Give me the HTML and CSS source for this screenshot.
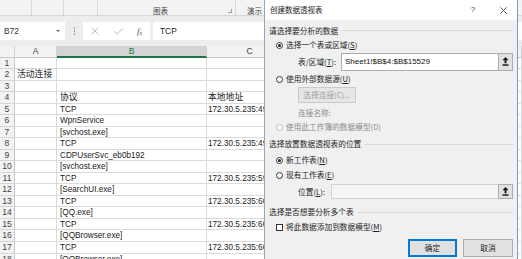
FILE: index.html
```html
<!DOCTYPE html>
<html lang="zh-CN">
<head>
<meta charset="utf-8">
<title>创建数据透视表</title>
<link rel="stylesheet" href="styles.css">
</head>
<body>
<div class="app">
  <div class="ribbon">
    <div class="rg rg1"></div>
    <div class="rg rg2"></div>
    <div class="rg rg3"></div>
    <div class="rg rg4"><span class="rlabel">图表</span><span class="launcher"></span></div>
    <div class="rg rg5"><span class="rlabel">演示</span></div>
  </div>
  <div class="fbar">
    <div class="namebox"><span>B72</span><span class="dd"></span></div>
    <div class="vdots"><i></i><i></i><i></i></div>
    <div class="fxbox">
      <svg class="ic-x" width="8" height="8" viewBox="0 0 8 8"><path d="M0.5 0.5L7.5 7.5M7.5 0.5L0.5 7.5" stroke="#b4b4b4" stroke-width="0.9" fill="none"/></svg>
      <svg class="ic-ok" width="9" height="7" viewBox="0 0 9 7"><path d="M0.5 3.5L3.2 6.2L8.5 0.6" stroke="#b4b4b4" stroke-width="0.9" fill="none"/></svg>
      <span class="fx">f<sub>x</sub></span>
    </div>
    <div class="finput">TCP</div>
  </div>
  <div class="sheet">
    <div class="c hd corner"></div><div class="c hd">A</div><div class="c hd sel">B</div><div class="c hd">C</div><div class="c hd"></div>
    <div class="c rh">1</div><div class="c"></div><div class="c"></div><div class="c"></div><div class="c"></div>
    <div class="c rh">2</div><div class="c cj">活动连接</div><div class="c"></div><div class="c"></div><div class="c"></div>
    <div class="c rh">3</div><div class="c"></div><div class="c"></div><div class="c"></div><div class="c"></div>
    <div class="c rh">4</div><div class="c"></div><div class="c cj">协议</div><div class="c cj">本地地址</div><div class="c"></div>
    <div class="c rh">5</div><div class="c"></div><div class="c">TCP</div><div class="c"><span class="ip">172.30.5.235:49768</span></div><div class="c"></div>
    <div class="c rh">6</div><div class="c"></div><div class="c">WpnService</div><div class="c"></div><div class="c"></div>
    <div class="c rh">7</div><div class="c"></div><div class="c">[svchost.exe]</div><div class="c"></div><div class="c"></div>
    <div class="c rh">8</div><div class="c"></div><div class="c">TCP</div><div class="c"><span class="ip">172.30.5.235:49770</span></div><div class="c"></div>
    <div class="c rh">9</div><div class="c"></div><div class="c">CDPUserSvc_eb0b192</div><div class="c"></div><div class="c"></div>
    <div class="c rh">10</div><div class="c"></div><div class="c">[svchost.exe]</div><div class="c"></div><div class="c"></div>
    <div class="c rh">11</div><div class="c"></div><div class="c">TCP</div><div class="c"><span class="ip">172.30.5.235:59412</span></div><div class="c"></div>
    <div class="c rh">12</div><div class="c"></div><div class="c">[SearchUI.exe]</div><div class="c"></div><div class="c"></div>
    <div class="c rh">13</div><div class="c"></div><div class="c">TCP</div><div class="c"><span class="ip">172.30.5.235:60231</span></div><div class="c"></div>
    <div class="c rh">14</div><div class="c"></div><div class="c">[QQ.exe]</div><div class="c"></div><div class="c"></div>
    <div class="c rh">15</div><div class="c"></div><div class="c">TCP</div><div class="c"><span class="ip">172.30.5.235:60344</span></div><div class="c"></div>
    <div class="c rh">16</div><div class="c"></div><div class="c">[QQBrowser.exe]</div><div class="c"></div><div class="c"></div>
    <div class="c rh">17</div><div class="c"></div><div class="c">TCP</div><div class="c"><span class="ip">172.30.5.235:60352</span></div><div class="c"></div>
    <div class="c rh">18</div><div class="c"></div><div class="c">[QQBrowser.exe]</div><div class="c"></div><div class="c"></div>
  </div>
</div>

<div class="dialog">
  <div class="dtitle">
    <span class="dt">创建数据透视表</span>
    <span class="help">?</span>
    <span class="close"><svg width="7" height="7" viewBox="0 0 7 7"><path d="M0.3 0.3L6.7 6.7M6.7 0.3L0.3 6.7" stroke="#333" stroke-width="0.8" fill="none"/></svg></span>
  </div>
  <div class="dbody">
    <div class="sec s1"><span>请选择要分析的数据</span><i class="rule"></i></div>
    <div class="opt o1"><span class="radio on"></span><span>选择一个表或区域(<u>S</u>)</span></div>
    <div class="field f1">
      <span class="flabel w1">表/区域(<u>T</u>):</span>
      <span class="inp">Sheet1!$B$4:$B$15529</span>
      <span class="pick"><svg width="7" height="9" viewBox="0 0 7 9"><path d="M3.5 0L6.5 3.3H4.4V6.3H2.6V3.3H0.5Z" fill="#111"/><rect x="0.5" y="7.3" width="6" height="1.4" fill="#111"/></svg></span>
    </div>
    <div class="opt o2"><span class="radio"></span><span>使用外部数据源(<u>U</u>)</span></div>
    <div class="sub bt"><span class="btn dis">选择连接(C)...</span></div>
    <div class="sub dim cname">连接名称:</div>
    <div class="opt dim o3"><span class="radio off"></span><span>使用此工作簿的数据模型(D)</span></div>
    <div class="sec s2"><span>选择放置数据透视表的位置</span><i class="rule"></i></div>
    <div class="opt o4"><span class="radio on"></span><span>新工作表(<u>N</u>)</span></div>
    <div class="opt o5"><span class="radio"></span><span>现有工作表(<u>E</u>)</span></div>
    <div class="field f2">
      <span class="flabel w2">位置(<u>L</u>):</span>
      <span class="inp dis"></span>
      <span class="pick"><svg width="7" height="9" viewBox="0 0 7 9"><path d="M3.5 0L6.5 3.3H4.4V6.3H2.6V3.3H0.5Z" fill="#111"/><rect x="0.5" y="7.3" width="6" height="1.4" fill="#111"/></svg></span>
    </div>
    <div class="sec s3"><span>选择是否想要分析多个表</span><i class="rule"></i></div>
    <div class="opt o6"><span class="check"></span><span>将此数据添加到数据模型(<u>M</u>)</span></div>
    <div class="actions"><span class="btn ok">确定</span><span class="btn cancel">取消</span></div>
  </div>
</div>
</body>
</html>
```

FILE: styles.css
```css
* { box-sizing: border-box; margin: 0; padding: 0; }
html, body { width: 522px; height: 259px; overflow: hidden; }
body {
  position: relative;
  background: #fff;
  font-family: "Liberation Sans", "Noto Sans CJK SC", sans-serif;
  color: #222;
}

/* ribbon */
.ribbon {
  display: flex;
  height: 16px;
  background: #f3f3f3;
  border-bottom: 1px solid #d8d8d8;
}
.rg {
  height: 15px;
  border-right: 1px solid #dadada;
  display: flex;
  align-items: flex-end;
}
.rg1 { width: 32px; }
.rg2 { width: 32px; }
.rg3 { width: 34px; }
.rg4 { width: 138px; padding-left: 55px; }
.rg5 { flex: 1; border-right: 0; padding-left: 11px; }
.rlabel {
  font-family: "Noto Sans CJK SC", sans-serif;
  font-size: 7.5px;
  line-height: 9px;
  color: #444;
}
.launcher {
  margin-left: auto;
  margin-right: 3px;
  margin-bottom: 2px;
  width: 4px;
  height: 4px;
  border-right: 1px solid #9a9a9a;
  border-bottom: 1px solid #9a9a9a;
}

/* formula bar */
.fbar {
  display: flex;
  align-items: flex-start;
  height: 30px;
  padding-top: 6px;
  background: #ededed;
}
.namebox, .fxbox, .finput {
  height: 18px;
  background: #fff;
  display: flex;
  align-items: center;
}
.namebox {
  width: 65px;
  padding-left: 4px;
  font-size: 8.4px;
  color: #333;
}
.dd {
  margin-left: auto;
  margin-right: 5px;
  width: 0; height: 0;
  border-left: 2px solid transparent;
  border-right: 2px solid transparent;
  border-top: 2px solid #666;
}
.vdots {
  width: 18px;
  height: 18px;
  display: flex;
  flex-direction: column;
  align-items: center;
  justify-content: center;
  gap: 1.5px;
}
.vdots i { width: 1px; height: 1.5px; background: #9a9a9a; display: block; }
.fxbox { width: 67px; padding-left: 8px; }
.ic-x { margin-right: 15px; }
.ic-ok { margin-right: 14px; }
.fx {
  font-family: "Liberation Serif", serif;
  font-style: italic;
  font-size: 9px;
  color: #555;
}
.fx sub { font-size: 6px; vertical-align: -1px; }
.finput {
  flex: 1;
  margin-left: 3px;
  padding-left: 7px;
  font-size: 8.4px;
  color: #222;
}

/* sheet */
.sheet {
  display: grid;
  grid-template-columns: 15px 42px 150px 86px 1fr;
  grid-template-rows: 11.5px;
  grid-auto-rows: 11.54px;
  font-size: 8.2px;
}
.c {
  border-right: 1px solid #dadada;
  border-bottom: 1px solid #dadada;
  white-space: nowrap;
  overflow: hidden;
  padding-left: 2px;
  line-height: 11px;
  color: #1a1a1a;
}
.c:nth-child(5n+3) { padding-left: 3px; }
.c:nth-child(5n+4) { padding-left: 1px; }
.ip { display: block; width: 56px; overflow: hidden; }
.cj { font-size: 8.8px; }
.hd {
  background: #f3f3f3;
  border-right-color: #d0d0d0;
  border-bottom-color: #c8c8c8;
  text-align: center;
  padding-left: 0 !important;
  font-size: 8.6px;
  color: #444;
}
.hd.sel {
  background: #d4d4d4;
  color: #217346;
  border-bottom: 2px solid #217346;
  line-height: 10px;
}
.rh {
  background: #f3f3f3;
  border-right-color: #c8c8c8;
  border-bottom-color: #d6d6d6;
  text-align: center;
  padding-left: 0 !important;
  font-size: 8.6px;
  color: #444;
}

/* dialog */
.dialog {
  position: absolute;
  left: 264px;
  top: -1px;
  width: 254px;
  height: 264px;
  border: 1px solid #7d9cc4;
  border-left-color: #8fa6c0;
  background: #f0f0f0;
  font-family: "Noto Sans CJK SC", sans-serif;
  font-size: 7.7px;
  line-height: 10px;
  color: #1e1e1e;
  display: flex;
  flex-direction: column;
}
.dtitle {
  height: 20px;
  background: #fff;
  display: flex;
  align-items: center;
  padding-left: 5px;
  padding-right: 7px;
  flex-shrink: 0;
}
.dt { font-size: 7.5px; color: #222; }
.help {
  margin-left: auto;
  width: 10px;
  text-align: center;
  margin-right: 18px;
  font-family: "Liberation Sans", sans-serif;
  font-size: 8px;
  color: #444;
}
.close { width: 14px; display: flex; justify-content: center; }
.dbody {
  padding: 0 4px;
  display: flex;
  flex-direction: column;
}
.sec { display: flex; align-items: center; height: 13px; }
.s1 { margin-top: 4px; }
.s2 { margin-top: 3px; height: 14px; }
.s3 { margin-top: 5px; height: 14px; }
.rule { flex: 1; height: 1px; background: #dadada; margin-left: 4px; display: block; }
.opt { display: flex; align-items: center; height: 14px; padding-left: 7px; }
.o1 { margin-top: 1px; }
.o2 { height: 16px; }
.o4 { margin-top: 2px; }
.o5 { margin-top: 1px; }
.o6 { margin-top: 1px; }
.radio {
  width: 7px; height: 7px;
  border: 1px solid #333;
  border-radius: 50%;
  background: #fff;
  margin-right: 3px;
  display: flex;
  align-items: center;
  justify-content: center;
  flex-shrink: 0;
}
.radio.on::after {
  content: "";
  width: 3px; height: 3px;
  border-radius: 50%;
  background: #222;
}
.radio.off { border-color: #bcbcbc; }
.check {
  width: 7px; height: 7px;
  border: 1px solid #333;
  background: #fff;
  margin-right: 3px;
  flex-shrink: 0;
}
.dim { color: #8c8c8c; }
.field { display: flex; align-items: center; padding-left: 29px; }
.f1 { height: 19px; }
.f2 { height: 17px; margin-top: 1px; }
.flabel { flex-shrink: 0; }
.w1 { width: 43px; }
.w2 { width: 33px; }
.inp {
  flex: 1;
  height: 18px;
  background: #fff;
  border: 1px solid #acacac;
  border-right: 0;
  font-family: "Liberation Sans", sans-serif;
  font-size: 8px;
  line-height: 16px;
  padding-left: 3px;
  color: #111;
}
.inp.dis { height: 15px; background: #f5f5f5; border-color: #d3d3d3; }
.pick {
  width: 15px;
  height: 18px;
  background: #e1e1e1;
  border: 1px solid #adadad;
  display: flex;
  align-items: center;
  justify-content: center;
}
.f2 .pick { height: 15px; }
.sub { padding-left: 29px; display: flex; align-items: center; }
.bt { height: 16px; }
.cname { height: 14px; margin-top: 3px; }
.btn {
  display: flex;
  align-items: center;
  justify-content: center;
  background: #e1e1e1;
  border: 1px solid #adadad;
}
.btn.dis {
  width: 58px;
  height: 16px;
  background: #e6e6e6;
  border-color: #cacaca;
  color: #a3a3a3;
}
.actions {
  display: flex;
  justify-content: flex-end;
  gap: 6px;
  margin-top: 5px;
}
.ok, .cancel { height: 18px; }
.ok { width: 49px; border: 1px solid #0078d7; box-shadow: inset 0 0 0 1px #0078d7; }
.cancel { width: 50px; }
u { text-decoration: underline; text-underline-offset: 1px; }
```
